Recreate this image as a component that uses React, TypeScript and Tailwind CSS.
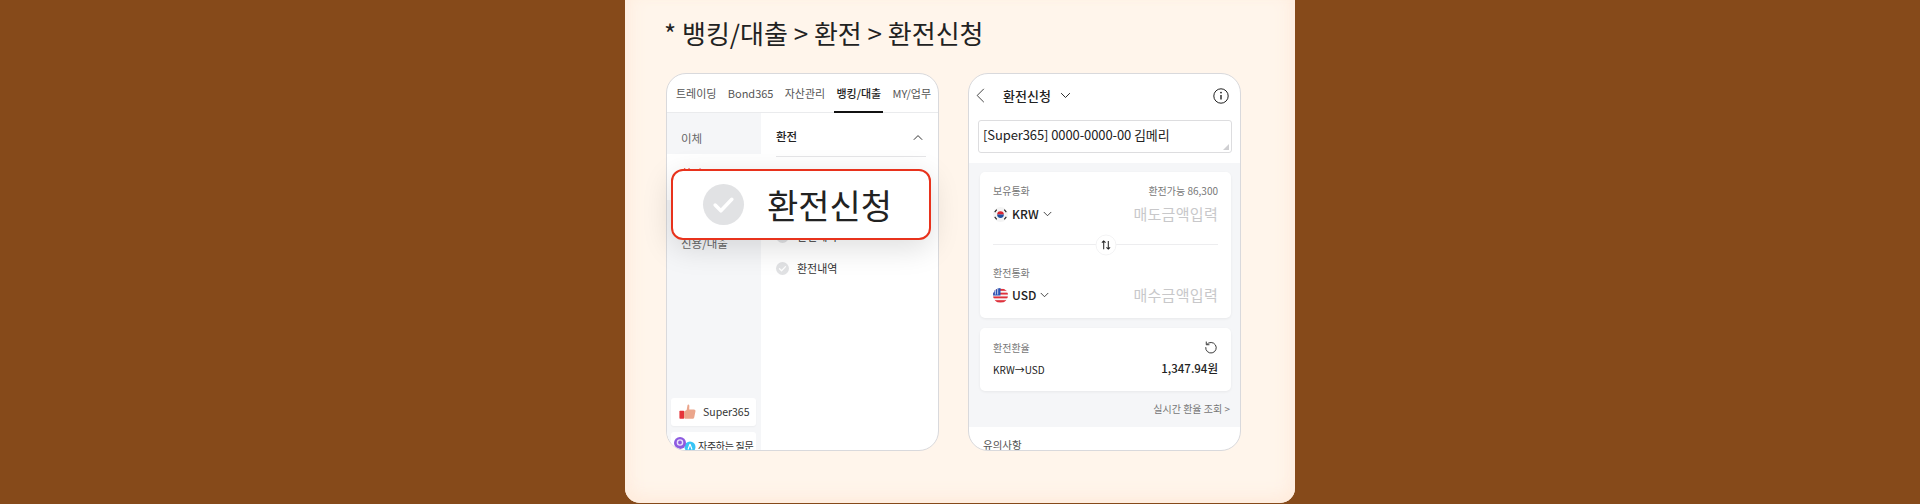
import React from "react";

const F = "font-['Noto_Sans_CJK_KR','Noto_Sans',sans-serif]";

function Check({ big }: { big?: boolean }) {
  return (
    <span className={big ? "flex h-[41px] w-[41px] items-center justify-center rounded-full bg-[#e1e2e4]" : "flex h-[13px] w-[13px] items-center justify-center rounded-full bg-[#e1e2e4]"}>
      <svg viewBox="0 0 24 24" className={big ? "h-[25px] w-[25px]" : "h-[9px] w-[9px]"} fill="none" stroke="#fff" strokeWidth="3.4" strokeLinecap="round" strokeLinejoin="round">
        <path d="M4 12.5l5.5 5.5L20 7" />
      </svg>
    </span>
  );
}

function Chevron({ className, up }: { className: string; up?: boolean }) {
  return (
    <svg viewBox="0 0 12 8" className={className} fill="none" stroke="currentColor" strokeWidth="1.1">
      <path d={up ? "M1 6.7L6 1.7l5 5" : "M1 1.3l5 5 5-5"} />
    </svg>
  );
}

function KrFlag() {
  return (
    <svg viewBox="0 0 16 16" className="h-[15px] w-[15px]">
      <circle cx="8" cy="8" r="8" fill="#f4f4f4" />
      <path d="M4.4 8a3.6 3.6 0 0 1 7.2 0z" fill="#d8232f" />
      <path d="M4.4 8a3.6 3.6 0 0 0 7.2 0z" fill="#1f4fa0" />
      <g stroke="#222" strokeWidth="1.2">
        <path d="M1.8 5.4l2.2-2.6M12 2.8l2.2 2.6M1.8 10.6l2.2 2.6M12 13.2l2.2-2.6" />
      </g>
    </svg>
  );
}

function UsFlag() {
  return (
    <svg viewBox="0 0 16 16" className="h-[15px] w-[15px]">
      <clipPath id="us"><circle cx="8" cy="8" r="8" /></clipPath>
      <g clipPath="url(#us)">
        <rect width="16" height="16" fill="#f5f5f5" />
        <rect y="1" width="16" height="2" fill="#e0313c" />
        <rect y="5" width="16" height="2" fill="#e0313c" />
        <rect y="9" width="16" height="2" fill="#e0313c" />
        <rect y="13" width="16" height="2.4" fill="#e0313c" />
        <rect width="8" height="8" fill="#2a53b5" />
        <path d="M2.5 1v6M5 0v7" stroke="#fff" strokeWidth="0.8" />
      </g>
    </svg>
  );
}

function Thumb() {
  return (
    <svg viewBox="0 0 20 18" className="h-[16px] w-[17px]">
      <rect x="0.5" y="7.5" width="5.5" height="9.5" rx="0.8" fill="#e5343a" />
      <path d="M6 8.5L9 6.5 10 1c.2-1 2-1 2.2.5L12 6h5.5c1.6 0 2.2 1.2 1.8 2.4l-1.4 7c-.3 1-1 1.6-2 1.6H8c-1.2 0-2-.5-2-1.5z" fill="#eba68c" />
    </svg>
  );
}

function QA() {
  return (
    <svg viewBox="0 0 22 18" className="h-[18px] w-[22px] shrink-0">
      <circle cx="16" cy="10" r="5.5" fill="#37c4f5" />
      <circle cx="6" cy="6" r="6" fill="#8d5ae0" />
      <circle cx="6" cy="5.5" r="2.6" fill="none" stroke="#e9e0fb" strokeWidth="1.4" />
      <path d="M16 7l-2 5.5M16 7l2 5.5" stroke="#fff" strokeWidth="1.1" />
    </svg>
  );
}

export default function App() {
  return (
    <div className={`flex h-[504px] w-full justify-center overflow-hidden bg-[#864a1a] ${F}`}>
      <div className="relative h-[503px] w-[670px] rounded-b-[15px] bg-[#fff5eb] pl-[41px] shadow-[inset_0_-14px_18px_-8px_#ffecdd,inset_14px_0_18px_-10px_#ffecdd,inset_-14px_0_18px_-10px_#ffecdd]">
        <p className="-ml-[2px] pt-[15px] text-[26px] leading-[36px] text-[#222]">* 뱅킹/대출 &gt; 환전 &gt; 환전신청</p>
        <div className="mt-[22px] flex gap-[29px]">
          {/* Left phone */}
          <div className="flex h-[378px] w-[273px] flex-col overflow-hidden rounded-[20px] border border-[#d9d9dc] bg-white">
            <div className="flex h-[39px] shrink-0 items-start justify-between border-b border-[#eaebed] pl-[9px] pr-[7px] pt-[11px] text-[11px] leading-[16px] text-[#555]">
              <span>트레이딩</span>
              <span>Bond365</span>
              <span>자산관리</span>
              <span className="relative font-medium text-[#222]">
                뱅킹/대출
                <span className="absolute -bottom-[12px] -left-[2px] -right-[2px] h-[2px] bg-[#111]" />
              </span>
              <span>MY/업무</span>
            </div>
            <div className="flex min-h-0 flex-1">
              <div className="flex w-[94px] shrink-0 flex-col bg-[#f5f6f8]">
                <div className="pl-[14px] pt-[16px] text-[11.5px] leading-[18px] text-[#666]">이체</div>
                <div className="mt-[7px] h-[46px] bg-white pl-[14px] pt-[10px] text-[11.5px] leading-[18px] text-[#e5412b]">환전</div>
                <div className="mt-[34px] pl-[14px] text-[11.5px] leading-[18px] text-[#666]">신용/대출</div>
                <div className="mt-auto flex flex-col gap-[6px] pl-[4px] pr-[5px]">
                  <div className="flex h-[28px] items-center gap-[7px] rounded-[3px] bg-white pl-[8px] text-[10.5px] text-[#333] shadow-[0_1px_2px_#0000000a]">
                    <Thumb />
                    <span>Super365</span>
                  </div>
                  <div className="-mb-[10px] flex h-[28px] items-start gap-[2px] rounded-[3px] bg-white pl-[3px] pt-[5px] text-[10px] leading-[16px] tracking-[-0.3px] text-[#333]">
                    <QA />
                    <span className="mt-[1px] whitespace-nowrap">자주하는 질문</span>
                  </div>
                </div>
              </div>
              <div className="flex-1 pl-[15px] pr-[12px]">
                <div className="flex h-[44px] items-center justify-between border-b border-[#e5e5e7] pt-[5px] text-[11.5px] font-medium text-[#222]">
                  <span>환전</span>
                  <Chevron up className="mr-[3px] h-[7px] w-[10px] text-[#222]" />
                </div>
                <div className="mt-[70px] flex items-center gap-[8px] text-[11px] leading-[18px] text-[#333]">
                  <Check />
                  <span>환전예약</span>
                </div>
                <div className="mt-[14px] flex items-center gap-[8px] text-[11px] leading-[18px] text-[#333]">
                  <Check />
                  <span>환전내역</span>
                </div>
              </div>
            </div>
          </div>
          {/* Right phone */}
          <div className="flex h-[378px] w-[273px] flex-col overflow-hidden rounded-[20px] border border-[#d9d9dc] bg-white">
            <div className="flex h-[46px] shrink-0 items-center justify-between pb-[3px] pl-[7px] pr-[11px]">
              <div className="flex items-center">
                <svg viewBox="0 0 10 18" className="h-[15px] w-[9px]" fill="none" stroke="#333" strokeWidth="1.1"><path d="M9 1L1 9l8 8" /></svg>
                <span className="ml-[18px] text-[13px] font-medium text-[#222]">환전신청</span>
                <Chevron className="ml-[9px] h-[7px] w-[11px] text-[#222]" />
              </div>
              <svg viewBox="0 0 16 16" className="h-[16px] w-[16px]" fill="none" stroke="#222" strokeWidth="1"><circle cx="8" cy="8" r="7.2" /><path d="M8 7v4.5" strokeWidth="1.4" /><circle cx="8" cy="4.6" r="0.9" fill="#222" stroke="none" /></svg>
            </div>
            <div className="relative ml-[9px] mr-[8px] h-[33px] shrink-0 rounded-[3px] border border-[#dddddf] pl-[4px] text-[13px] leading-[28px] tracking-[-0.1px] text-[#222]">
              [Super365] 0000-0000-00 김메리
              <span className="absolute bottom-[2px] right-[2px] h-0 w-0 border-b-[6px] border-l-[6px] border-b-[#cfcfd2] border-l-transparent" />
            </div>
            <div className="mt-[10px] flex shrink-0 flex-col gap-[10px] bg-[#f5f6f8] pl-[11px] pr-[9px] pt-[9px]">
              <div className="h-[146px] rounded-[5px] bg-white px-[13px] pt-[12px] shadow-[0_1px_3px_#0000000f]">
                <div className="flex items-center justify-between text-[10px] leading-[14px] text-[#777]">
                  <span>보유통화</span>
                  <span>환전가능 86,300</span>
                </div>
                <div className="mt-[4px] flex h-[24px] items-center justify-between">
                  <span className="flex items-center gap-[4px] text-[12px] font-medium text-[#222]">
                    <KrFlag />KRW<Chevron className="h-[6px] w-[9px]" />
                  </span>
                  <span className="text-[15px] tracking-[0.3px] text-[#c8c8ca]">매도금액입력</span>
                </div>
                <div className="relative mt-[18px] h-px bg-[#ededef]">
                  <span className="absolute left-1/2 top-1/2 flex h-[21px] w-[21px] -translate-x-1/2 -translate-y-1/2 items-center justify-center rounded-full border border-[#f3f3f4] bg-white">
                    <svg viewBox="0 0 12 12" className="h-[11px] w-[11px]" fill="none" stroke="#222" strokeWidth="1.1"><path d="M3.5 10.5v-9M1.5 3.5l2-2 2 2M8.5 1.5v9M6.5 8.5l2 2 2-2" /></svg>
                  </span>
                </div>
                <div className="mt-[21px] text-[10px] leading-[14px] text-[#777]">환전통화</div>
                <div className="mt-[3px] flex h-[24px] items-center justify-between">
                  <span className="flex items-center gap-[4px] text-[12px] font-medium text-[#222]">
                    <UsFlag />USD<Chevron className="h-[6px] w-[9px]" />
                  </span>
                  <span className="text-[15px] tracking-[0.3px] text-[#c8c8ca]">매수금액입력</span>
                </div>
              </div>
              <div className="h-[63px] rounded-[5px] bg-white px-[13px] pt-[11px] shadow-[0_1px_3px_#0000000f]">
                <div className="flex h-[16px] items-center justify-between text-[10px] text-[#777]">
                  <span>환전환율</span>
                  <svg viewBox="0 0 16 16" className="h-[14px] w-[14px]" fill="none" stroke="#333" strokeWidth="1.1"><path d="M3.2 5.2A6 6 0 1 1 2 8.2M2.6 1.8v3.6h3.6" /></svg>
                </div>
                <div className="mt-[6px] flex h-[16px] items-center justify-between text-[#222]">
                  <span className="text-[10px]">KRW→USD</span>
                  <span className="text-[11.5px] font-medium">1,347.94원</span>
                </div>
              </div>
              <div className="mt-[1px] pb-[11px] pr-[1px] text-right text-[10px] leading-[14px] text-[#777]">실시간 환율 조회 &gt;</div>
            </div>
            <div className="pl-[14px] pt-[11px] text-[10.5px] leading-[14px] text-[#555]">유의사항</div>
          </div>
        </div>
        {/* spotlight callout over the left phone */}
        <div className="absolute left-[46px] top-[169px] flex h-[71px] w-[260px] items-center rounded-[12px] border-2 border-[#e8321c] bg-white pl-[30px] shadow-[0_8px_30px_#00000022]">
          <Check big />
          <span className="ml-[23px] text-[34px] leading-[66px] text-[#222]">환전신청</span>
        </div>
      </div>
    </div>
  );
}
